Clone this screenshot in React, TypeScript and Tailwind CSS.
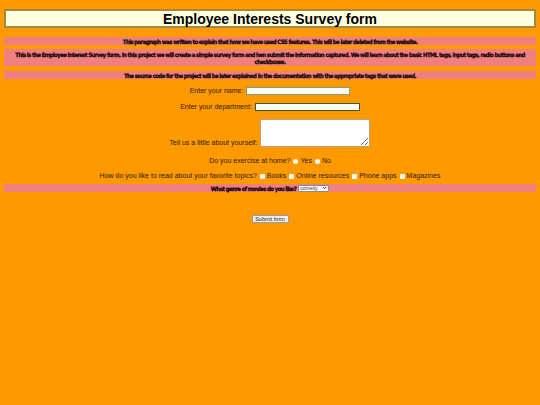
export default function App() {
  const narrow =
    "font-['Impact','DejaVu_Sans_Condensed',sans-serif] font-bold text-[6px] leading-[7px] tracking-[-0.6px] text-[#140404] [-webkit-text-stroke:0.25px_#140404] text-center";
  return (
    <div className="min-h-[405px] w-[540px] bg-[#ff9900] px-1 pt-[9px] font-['Liberation_Sans',Arial,sans-serif] text-[7px] leading-[8px] text-[#2a1a00]">
      <h1 className="border-2 border-[#a08a3c] bg-[#ffffe0] text-center text-[14px] font-bold leading-[14px] py-[0.5px] text-black">
        Employee Interests Survey form
      </h1>
      <p className={`${narrow} mt-[9px] bg-[#f08080] py-[0.5px]`}>
        This paragraph was written to explain that how we have used CSS features. This will be later deleted from the website.
      </p>
      <p className={`${narrow} mt-[4px] bg-[#f08080] py-[1.5px] px-[2px]`}>
        This is the Employee Interest Survey form. In this project we will create a simple survey form and hen submit the information captured. We will learn about the basic HTML tags, input tags, radio buttons and checkboxes.
      </p>
      <p className={`${narrow} mt-[5px] bg-[#f08080] py-[0.5px]`}>
        The source code for the project will be later explained in the documentation with the appropriate tags that were used.
      </p>
      <form className="text-center">
        <div className="mt-[8px] flex items-center justify-center gap-[3px]">
          <span>Enter your name:</span>
          <input className="h-[8px] w-[104px] border border-[#8c9c6a] bg-white" />
        </div>
        <div className="mt-[8px] flex items-center justify-center gap-[3px]">
          <span>Enter your department:</span>
          <input className="h-[8px] w-[105px] border border-[#3f5a22] bg-white" />
        </div>
        <div className="mt-[8px] flex items-end justify-center gap-[3px]">
          <span>Tell us a little about yourself:</span>
          <textarea className="h-[28px] w-[110px] resize border border-[#b9a27a] bg-white" />
        </div>
        <div className="mt-[10px] flex items-center justify-center gap-[2px]">
          <span className="mr-[1px]">Do you exercise at home?</span>
          <span className="h-[5px] w-[5px] rounded-full bg-white" />
          <span>Yes</span>
          <span className="ml-[1px] h-[5px] w-[5px] rounded-full bg-white" />
          <span>No</span>
        </div>
        <div className="mt-[7px] flex items-center justify-center gap-[2px]">
          <span className="mr-[1px]">How do you like to read about your favorite topics?</span>
          <span className="h-[5px] w-[5px] rounded-[1px] bg-white" />
          <span>Books</span>
          <span className="ml-[1px] h-[5px] w-[5px] rounded-[1px] bg-white" />
          <span>Online resources</span>
          <span className="ml-[1px] h-[5px] w-[5px] rounded-[1px] bg-white" />
          <span>Phone apps</span>
          <span className="ml-[1px] h-[5px] w-[5px] rounded-[1px] bg-white" />
          <span>Magazines</span>
        </div>
        <div className="mt-[4px] flex h-[8px] items-center justify-center gap-[2px] bg-[#f08080]">
          <span className={narrow.replace("text-center", "")}>What genre of movies do you like?</span>
          <span className="flex h-[7px] w-[31px] items-center justify-between rounded-[1px] border border-[#8a8a8a] bg-white px-[1px] text-[5px] leading-[5px] text-[#333]">
            <span>comedy</span>
            <svg width="5" height="4" viewBox="0 0 5 4">
              <path d="M0.8 1 L2.5 2.8 L4.2 1" fill="none" stroke="#222" strokeWidth="0.9" />
            </svg>
          </span>
        </div>
        <div className="mt-[23px] flex justify-center">
          <button
            type="button"
            className="h-[8px] w-[37px] rounded-[1px] border border-[#9a9a9a] bg-[#efefef] text-[5.5px] leading-[6px] text-[#222]"
          >
            Submit form
          </button>
        </div>
      </form>
    </div>
  );
}
